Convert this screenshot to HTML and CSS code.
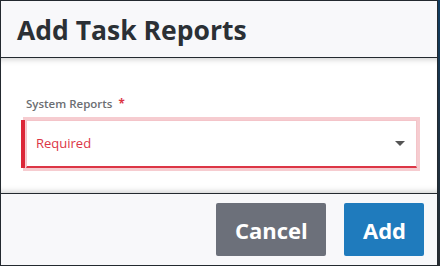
FILE: index.html
```html
<html>
<head>
<title>Add Task Reports</title>
<link rel="stylesheet" href="styles.css">
</head>
<body>
<div class="modal">

   <div class="modal-header">
      <h2 class="modal-title">Add Task Reports</h2>
   </div>

   <div class="modal-body">
      <label class="field-label">System Reports <span class="req">*</span></label>
      <div class="select invalid">
         <span class="select-value">Required</span>
         <span class="caret"></span>
      </div>
   </div>

   <div class="modal-footer">
      <button type="button" class="btn btn-cancel">Cancel</button>
      <button type="button" class="btn btn-add">Add</button>
   </div>

</div>
</body>
</html>
```

FILE: styles.css
```css
/* page */
   html, body   {margin: 0; padding: 0; height: 100%}
   body         {background: linear-gradient(#103d62, #1c3347 40%, #272c31);
                 font-family: "Open Sans", "Liberation Sans", sans-serif}

/* modal */
   .modal       {width: 438px; height: 266px; box-sizing: border-box;
                 border: 1px solid #23292f; display: flex; flex-direction: column;
                 background-color: #fff}

   .modal-header {flex: none; background-color: #f8f8fa;
                  border-bottom: 1px solid #23292f;
                  display: flex; align-items: center; padding: 1px 0 0 16px;
                  box-sizing: border-box; height: 57px}
   .modal-title  {margin: 0; font-size: 26.5px; font-weight: 700; color: #2b3035}

   .modal-body  {flex: 1; background-color: #fff; padding: 38px 20px 0 25px;
                 box-shadow: inset 0 7px 6px -6px rgba(0,0,0,0.22),
                             inset 0 -7px 6px -6px rgba(0,0,0,0.22)}

   .field-label {display: block; font-size: 11.5px; font-weight: 600; color: #6b6e72;
                 margin: 0 0 8px 0; line-height: 16px}
   .req         {color: #dc3545; font-weight: 700; margin-left: 3px}

   .select      {position: relative; height: 48px; box-sizing: border-box;
                 border: 1px solid #f4c4c9; border-bottom: 2px solid #dc3545;
                 box-shadow: 0 0 0 3px rgba(220,53,69,0.25);
                 display: flex; align-items: center; padding: 0 11px 1px 9px;
                 background-color: #fff}
   .select.invalid:before {content: ""; position: absolute; left: -6px; top: -1px;
                 width: 4px; height: 48px; background-color: #dc2637}
   .select-value {flex: 1; font-size: 13px; color: #dc3545}
   .caret       {width: 0; height: 0; border-left: 5px solid transparent;
                 border-right: 5px solid transparent; border-top: 5px solid #555;
                 margin-top: 1px}

   .modal-footer {height: 72px; flex: none; box-sizing: border-box;
                  background-color: #f8f8fa; border-top: 1px solid #23292f;
                  display: flex; justify-content: flex-end; align-items: flex-start;
                  gap: 18px; padding: 9px 13px 0 0}

   .btn         {height: 53px; border: 0; border-radius: 2px; padding: 0 19px;
                 font-family: "Open Sans", "Liberation Sans", sans-serif;
                 font-size: 22px; font-weight: 700; color: #fff; cursor: pointer}
   .btn-cancel  {background-color: #6c707a; width: 110px}
   .btn-add     {background-color: #1f7bbd; width: 80px}
```
